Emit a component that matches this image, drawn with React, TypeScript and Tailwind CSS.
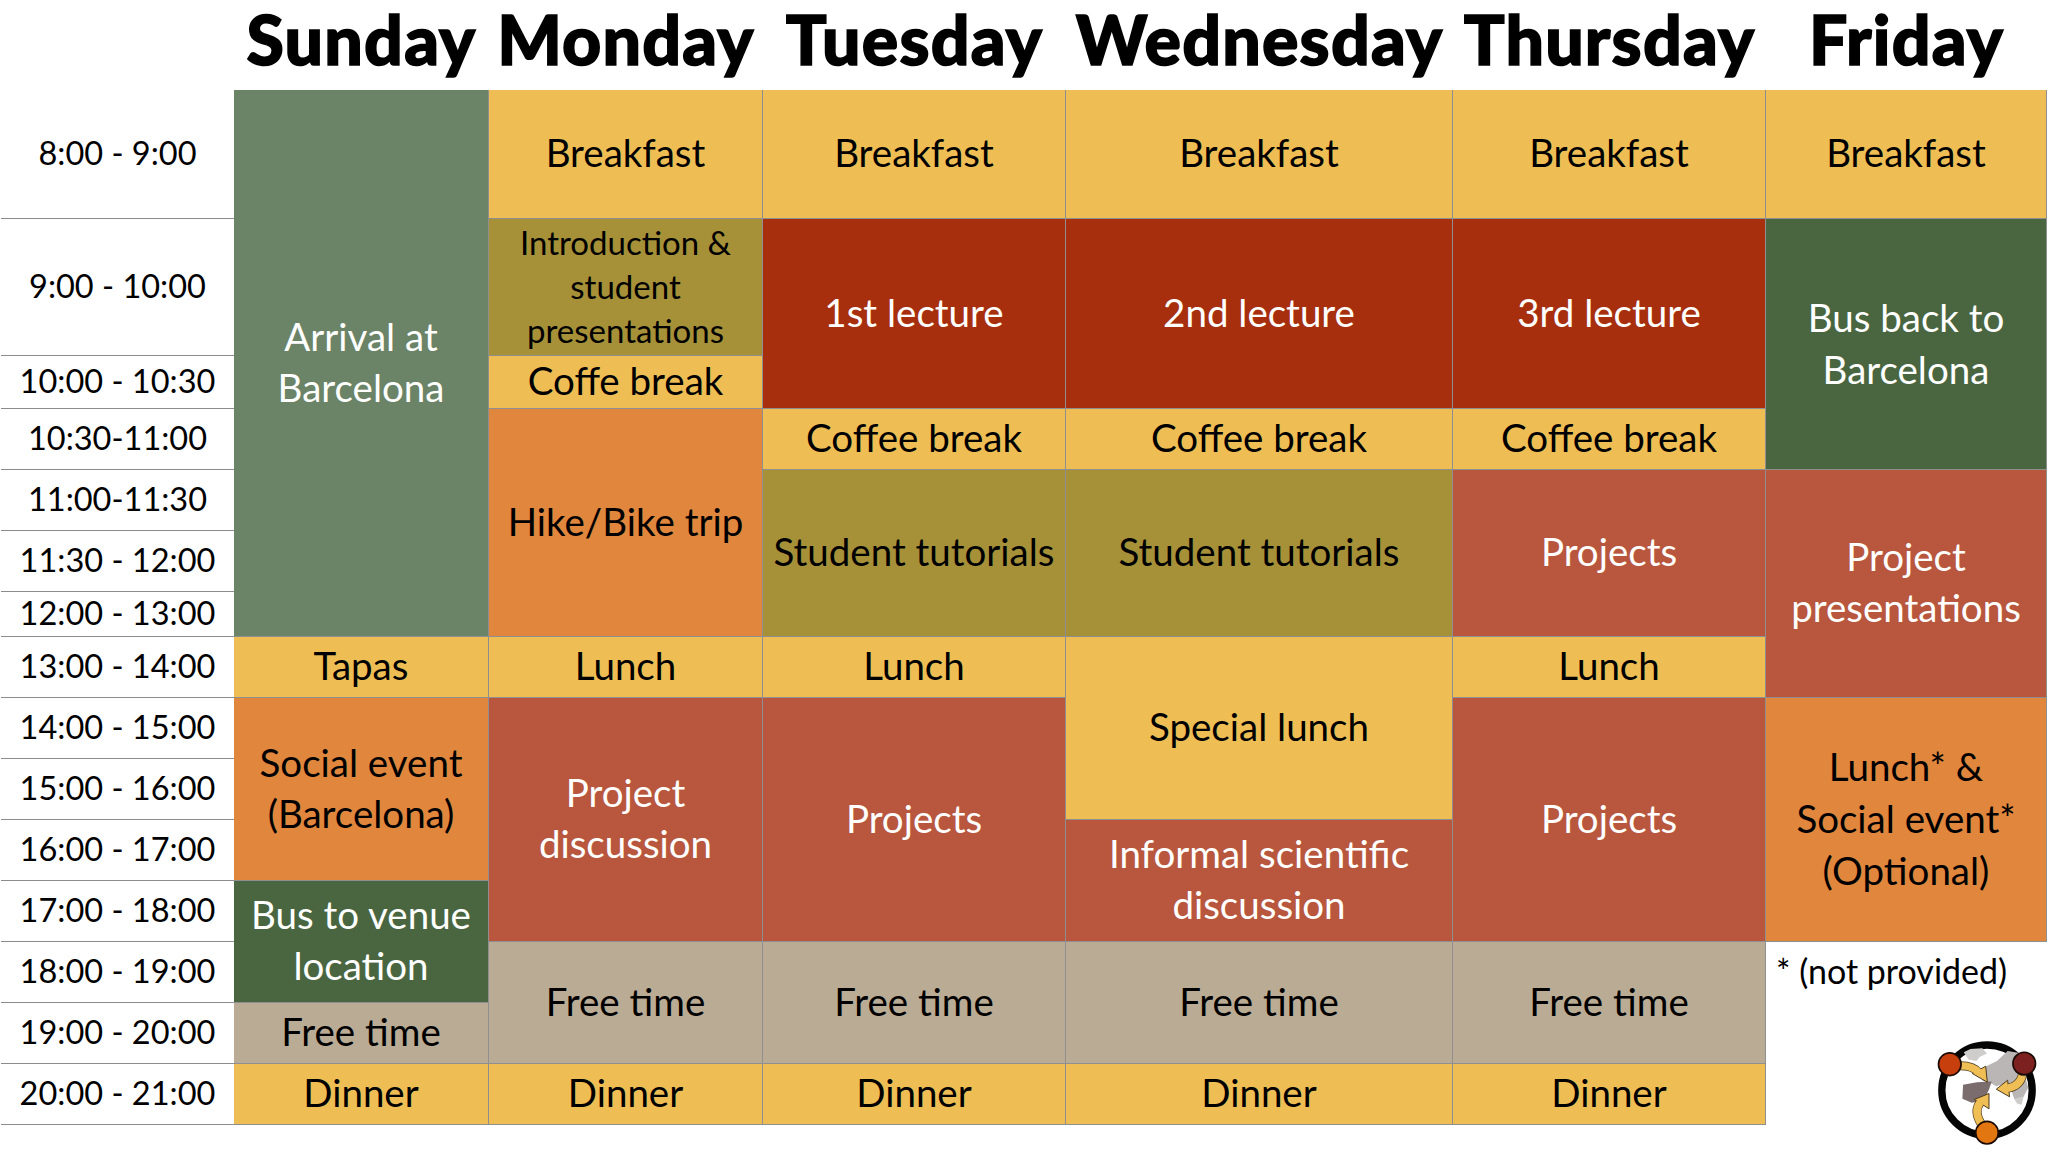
import React from 'react';

const Y = 'bg-[#eebe54] text-black';
const G = 'bg-[#6b8367] text-white';
const O = 'bg-[#a69138] text-black';
const R = 'bg-[#a72f0e] text-white';
const B = 'bg-[#b8573d] text-white';
const A = 'bg-[#e0863d] text-black';
const D = 'bg-[#496641] text-white';
const T = 'bg-[#baab94] text-black';

function Head({ pos, children }: { pos: string; children: React.ReactNode }) {
  return (
    <div className={`${pos} row-start-1 flex items-center justify-center pb-[12px] text-[68px] font-black leading-none tracking-[1.2px] text-black whitespace-nowrap [-webkit-text-stroke:1.5px_black]`}>
      {children}
    </div>
  );
}

function Time({ pos, children }: { pos: string; children: React.ReactNode }) {
  return (
    <div className={`${pos} col-start-1 ml-px flex items-center justify-center border-b border-[#8c8c8c] pb-[2px] text-[32.5px] leading-none text-black whitespace-nowrap`}>
      {children}
    </div>
  );
}

function Cell({ pos, color, size, children }: { pos: string; color: string; size?: 'small' | 'wide'; children: React.ReactNode }) {
  const type =
    size === 'small' ? 'text-[33px] leading-[44px]' : size === 'wide' ? 'text-[38.5px] leading-[52px]' : 'text-[38.5px] leading-[51px]';
  return (
    <div className={`${pos} ${color} ${type} flex items-center justify-center whitespace-pre-line border-b border-r border-[#8f8f8f] pb-[3px] text-center`}>
      {children}
    </div>
  );
}

function Logo() {
  const arrow = (d: string, head: string) => (
    <g>
      <path d={d} fill="none" stroke="#4a3a20" strokeWidth="27" />
      <polygon points={head} fill="#efbe54" stroke="#4a3a20" strokeWidth="3" strokeLinejoin="round" />
      <path d={d} fill="none" stroke="#efbe54" strokeWidth="23" />
    </g>
  );
  return (
    <svg viewBox="-20 20 330 340" width="110" height="113" className="mr-[4px] ml-auto mt-auto mb-[2px] block">
      <circle cx="142" cy="180" r="136" fill="#ffffff" stroke="#050505" strokeWidth="22" />
      <path d="M72 66 L92 56 L128 54 L142 70 L120 80 L110 92 L86 88 Z" fill="#cfcccc" />
      <path d="M132 112 L172 92 L204 62 L240 68 L254 130 L266 172 L242 220 L224 206 L214 178 L190 162 L170 168 L150 157 L128 152 Z" fill="#bab6b6" />
      <path d="M224 206 L252 198 L246 224 L232 220 Z" fill="#cfcccc" />
      <path d="M70 164 L112 156 L156 154 L148 178 L132 212 L96 218 L68 206 Z" fill="#7b6d6e" />
      {arrow('M50 107 Q100 104 118 128', '98,130 138,108 143,156')}
      {arrow('M248 136 Q240 168 204 174', '204,150 170,177 210,200')}
      {arrow('M126 284 Q100 244 122 216', '104,208 148,190 148,236')}
      <circle cx="30" cy="102" r="34" fill="#c63f0c" stroke="#1a0a04" strokeWidth="5" />
      <circle cx="254" cy="100" r="34" fill="#7c2020" stroke="#1a0a04" strokeWidth="5" />
      <circle cx="142" cy="308" r="34" fill="#e27610" stroke="#1a0a04" strokeWidth="5" />
    </svg>
  );
}

export default function App() {
  return (
    <div className="grid h-[1152px] w-[2054px] grid-cols-[234px_255px_274px_303px_387px_313px_281px_7px] grid-rows-[90px_129px_137px_53px_61px_61px_61px_45px_61px_61px_61px_61px_61px_61px_61px_61px_27px] bg-white font-['Lato',sans-serif] text-black">
      <Head pos="col-start-2">Sunday</Head>
      <Head pos="col-start-3">Monday</Head>
      <Head pos="col-start-4">Tuesday</Head>
      <Head pos="col-start-5">Wednesday</Head>
      <Head pos="col-start-6">Thursday</Head>
      <Head pos="col-start-7">Friday</Head>

      <Time pos="row-start-2">8:00 - 9:00</Time>
      <Time pos="row-start-3">9:00 - 10:00</Time>
      <Time pos="row-start-4">10:00 - 10:30</Time>
      <Time pos="row-start-5">10:30-11:00</Time>
      <Time pos="row-start-6">11:00-11:30</Time>
      <Time pos="row-start-7">11:30 - 12:00</Time>
      <Time pos="row-start-8">12:00 - 13:00</Time>
      <Time pos="row-start-9">13:00 - 14:00</Time>
      <Time pos="row-start-10">14:00 - 15:00</Time>
      <Time pos="row-start-11">15:00 - 16:00</Time>
      <Time pos="row-start-12">16:00 - 17:00</Time>
      <Time pos="row-start-13">17:00 - 18:00</Time>
      <Time pos="row-start-14">18:00 - 19:00</Time>
      <Time pos="row-start-15">19:00 - 20:00</Time>
      <Time pos="row-start-16">20:00 - 21:00</Time>

      <Cell pos="col-start-2 row-start-2 row-end-9" color={G}>{'Arrival at\nBarcelona'}</Cell>
      <Cell pos="col-start-2 row-start-9 row-end-10" color={Y}>Tapas</Cell>
      <Cell pos="col-start-2 row-start-10 row-end-13" color={A}>{'Social event\n(Barcelona)'}</Cell>
      <Cell pos="col-start-2 row-start-13 row-end-15" color={D}>{'Bus to venue\nlocation'}</Cell>
      <Cell pos="col-start-2 row-start-15 row-end-16" color={T}>Free time</Cell>
      <Cell pos="col-start-2 row-start-16 row-end-17" color={Y}>Dinner</Cell>

      <Cell pos="col-start-3 row-start-2 row-end-3" color={Y}>Breakfast</Cell>
      <Cell pos="col-start-3 row-start-3 row-end-4" color={O} size="small">{'Introduction &\nstudent\npresentations'}</Cell>
      <Cell pos="col-start-3 row-start-4 row-end-5" color={Y}>Coffe break</Cell>
      <Cell pos="col-start-3 row-start-5 row-end-9" color={A}>Hike/Bike trip</Cell>
      <Cell pos="col-start-3 row-start-9 row-end-10" color={Y}>Lunch</Cell>
      <Cell pos="col-start-3 row-start-10 row-end-14" color={B}>{'Project\ndiscussion'}</Cell>
      <Cell pos="col-start-3 row-start-14 row-end-16" color={T}>Free time</Cell>
      <Cell pos="col-start-3 row-start-16 row-end-17" color={Y}>Dinner</Cell>

      <Cell pos="col-start-4 row-start-2 row-end-3" color={Y}>Breakfast</Cell>
      <Cell pos="col-start-4 row-start-3 row-end-5" color={R}>1st lecture</Cell>
      <Cell pos="col-start-4 row-start-5 row-end-6" color={Y}>Coffee break</Cell>
      <Cell pos="col-start-4 row-start-6 row-end-9" color={O}>Student tutorials</Cell>
      <Cell pos="col-start-4 row-start-9 row-end-10" color={Y}>Lunch</Cell>
      <Cell pos="col-start-4 row-start-10 row-end-14" color={B}>Projects</Cell>
      <Cell pos="col-start-4 row-start-14 row-end-16" color={T}>Free time</Cell>
      <Cell pos="col-start-4 row-start-16 row-end-17" color={Y}>Dinner</Cell>

      <Cell pos="col-start-5 row-start-2 row-end-3" color={Y}>Breakfast</Cell>
      <Cell pos="col-start-5 row-start-3 row-end-5" color={R}>2nd lecture</Cell>
      <Cell pos="col-start-5 row-start-5 row-end-6" color={Y}>Coffee break</Cell>
      <Cell pos="col-start-5 row-start-6 row-end-9" color={O}>Student tutorials</Cell>
      <Cell pos="col-start-5 row-start-9 row-end-12" color={Y}>Special lunch</Cell>
      <Cell pos="col-start-5 row-start-12 row-end-14" color={B}>{'Informal scientific\ndiscussion'}</Cell>
      <Cell pos="col-start-5 row-start-14 row-end-16" color={T}>Free time</Cell>
      <Cell pos="col-start-5 row-start-16 row-end-17" color={Y}>Dinner</Cell>

      <Cell pos="col-start-6 row-start-2 row-end-3" color={Y}>Breakfast</Cell>
      <Cell pos="col-start-6 row-start-3 row-end-5" color={R}>3rd lecture</Cell>
      <Cell pos="col-start-6 row-start-5 row-end-6" color={Y}>Coffee break</Cell>
      <Cell pos="col-start-6 row-start-6 row-end-9" color={B}>Projects</Cell>
      <Cell pos="col-start-6 row-start-9 row-end-10" color={Y}>Lunch</Cell>
      <Cell pos="col-start-6 row-start-10 row-end-14" color={B}>Projects</Cell>
      <Cell pos="col-start-6 row-start-14 row-end-16" color={T}>Free time</Cell>
      <Cell pos="col-start-6 row-start-16 row-end-17" color={Y}>Dinner</Cell>

      <Cell pos="col-start-7 row-start-2 row-end-3" color={Y}>Breakfast</Cell>
      <Cell pos="col-start-7 row-start-3 row-end-6" color={D} size="wide">{'Bus back to\nBarcelona'}</Cell>
      <Cell pos="col-start-7 row-start-6 row-end-10" color={B}>{'Project\npresentations'}</Cell>
      <Cell pos="col-start-7 row-start-10 row-end-14" color={A} size="wide">{'Lunch* &\nSocial event*\n(Optional)'}</Cell>
      <div className="col-start-7 row-start-14 row-end-18 flex flex-col pl-[10px] pt-[6px] text-[34px] leading-[46px] text-black whitespace-nowrap">
        <span>* (not provided)</span>
        <Logo />
      </div>
    </div>
  );
}
